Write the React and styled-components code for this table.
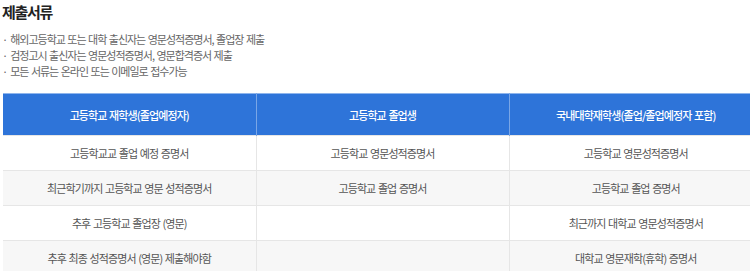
import styled, { createGlobalStyle } from "styled-components";

const GlobalStyle = createGlobalStyle`
  html, body {
    margin: 0;
    padding: 0;
    overflow: hidden;
    background: #fff;
  }
  body {
    font-family: "Noto Sans CJK KR", "Noto Sans", sans-serif;
  }
`;

const Page = styled.div`
  width: 761px;
  padding: 0 0 0 3px;
`;

const Title = styled.h3`
  margin: 0 0 0 -1px;
  padding: 3px 0 0 0;
  height: 21px;
  font-size: 15px;
  font-weight: 700;
  color: #222;
  letter-spacing: -1.3px;
  line-height: 18px;
`;

const Notes = styled.ul`
  list-style: none;
  margin: 7px 0 0 -1px;
  padding: 0;
`;

const Note = styled.li`
  font-size: 11px;
  line-height: 16px;
  color: #666;
  letter-spacing: -1px;
  word-spacing: 1px;
  &::before {
    content: "·";
    margin-right: 3px;
  }
`;

const Table = styled.table`
  margin-top: 14px;
  width: 759px;
  border-collapse: collapse;
  table-layout: fixed;
  border-top: 1px solid #8fb5ec;
`;

const Head = styled.th`
  height: 41px;
  padding: 0;
  background: #2e74d9;
  color: #fff;
  font-size: 11px;
  font-weight: 500;
  letter-spacing: -0.9px;
  word-spacing: 1px;
  border-left: 1px solid #7aa6e6;
  &:first-child {
    border-left: none;
  }
`;

const Row = styled.tr`
  background: ${(p) => (p.$alt ? "#f7f7f7" : "#fff")};
  border-top: 1px solid #e6e6e6;
`;

const Cell = styled.td`
  height: 34px;
  padding: 0;
  text-align: center;
  font-size: 11px;
  color: #555;
  letter-spacing: -0.9px;
  word-spacing: 1px;
  border-left: 1px solid #e6e6e6;
  &:first-child {
    border-left: none;
  }
`;

const notes = [
  "해외고등학교 또는 대학 출신자는 영문성적증명서, 졸업장 제출",
  "검정고시 출신자는 영문성적증명서, 영문합격증서 제출",
  "모든 서류는 온라인 또는 이메일로 접수가능",
];

const heads = [
  "고등학교 재학생(졸업예정자)",
  "고등학교 졸업생",
  "국내대학재학생(졸업/졸업예정자 포함)",
];

const rows = [
  ["고등학교교 졸업 예정 증명서", "고등학교 영문성적증명서", "고등학교 영문성적증명서"],
  ["최근학기까지 고등학교 영문 성적증명서", "고등학교 졸업 증명서", "고등학교 졸업 증명서"],
  ["추후 고등학교 졸업장 (영문)", "", "최근까지 대학교 영문성적증명서"],
  ["추후 최종 성적증명서 (영문) 제출해야함", "", "대학교 영문재학(휴학) 증명서"],
];

function App() {
  return (
    <>
      <GlobalStyle />
      <Page>
        <Title>제출서류</Title>
        <Notes>
          {notes.map((n) => (
            <Note key={n}>{n}</Note>
          ))}
        </Notes>
        <Table>
          <thead>
            <tr>
              {heads.map((h) => (
                <Head key={h}>{h}</Head>
              ))}
            </tr>
          </thead>
          <tbody>
            {rows.map((r, i) => (
              <Row key={i} $alt={i % 2 === 1}>
                {r.map((c, j) => (
                  <Cell key={j}>{c}</Cell>
                ))}
              </Row>
            ))}
          </tbody>
        </Table>
      </Page>
    </>
  );
}

export default App;
